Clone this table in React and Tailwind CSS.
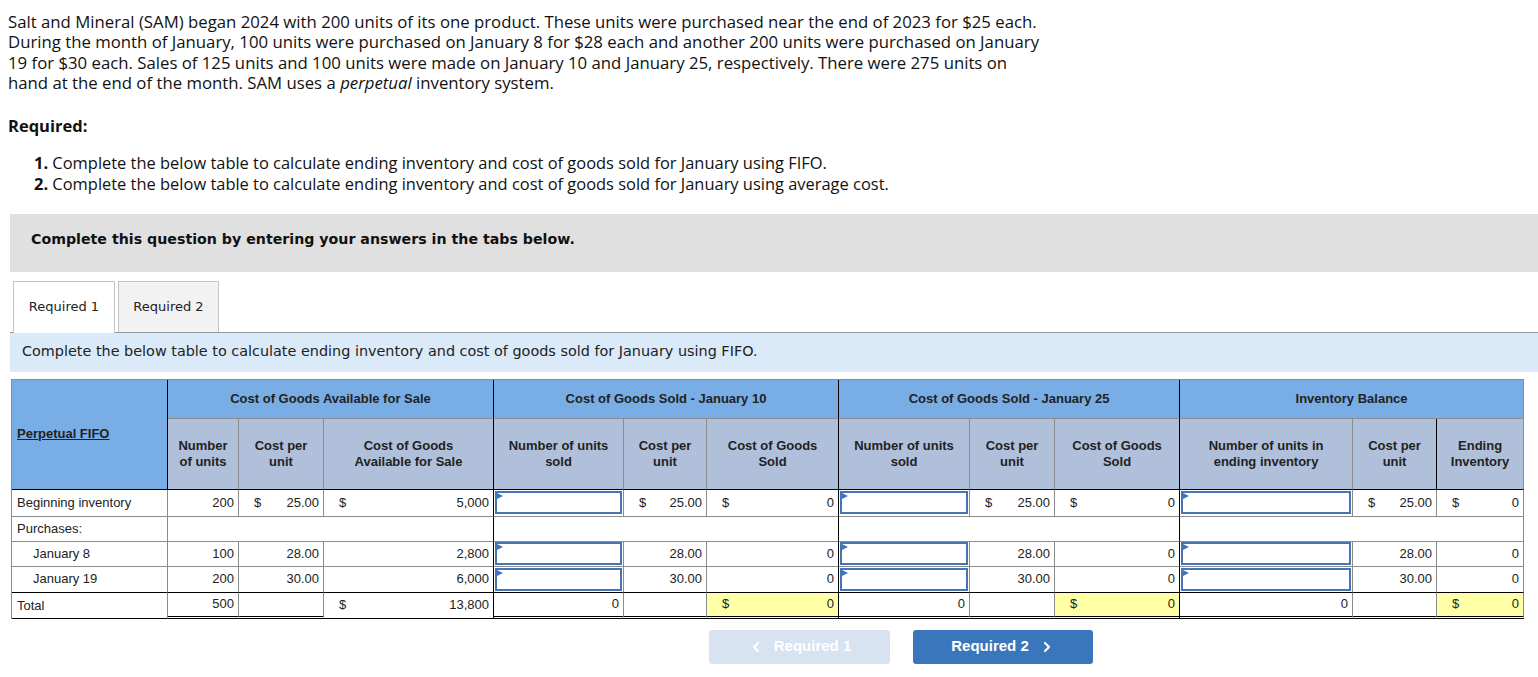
import React from 'react';
import { ChevronLeft, ChevronRight } from 'lucide-react';

const intro = "font-['Open_Sans','Lato',sans-serif] text-[#111]";
const verd = "font-['DejaVu_Sans','Verdana',sans-serif]";
const arial = "font-['Liberation_Sans','Arial',sans-serif]";

const RIGHT = {
  g: 'border-r border-r-[#8c8c8c]',
  k: 'border-r border-r-black',
};
const BOTTOM = {
  g: 'border-b border-b-[#8c8c8c]',
  k: 'border-b border-b-black',
  d: 'border-b-[3px] border-double border-b-black',
};

function Cell({ children, r = 'g', b = 'g', colSpan, className = '' }) {
  return (
    <td colSpan={colSpan} className={`${RIGHT[r]} ${BOTTOM[b]} p-0 align-middle ${className}`}>
      {children}
    </td>
  );
}

const Num = ({ v }) => <div className="text-right pr-[4px]">{v}</div>;

const Money = ({ v }) => (
  <div className="flex justify-between pl-[15px] pr-[4px]">
    <span>$</span>
    <span>{v}</span>
  </div>
);

const InputBox = () => (
  <div className="relative mx-[1px] h-[calc(100%-2px)] min-h-[23px] border-2 border-[#4674b4] bg-white">
    <span className="absolute left-0 top-0 h-0 w-0 border-y-[3px] border-l-[6px] border-y-transparent border-l-[#3d74c4]" />
  </div>
);

const heads = [
  { title: 'Cost of Goods Available for Sale', subs: [['Number', 'of units'], ['Cost per', 'unit'], ['Cost of Goods', 'Available for Sale']] },
  { title: 'Cost of Goods Sold - January 10', subs: [['Number of units', 'sold'], ['Cost per', 'unit'], ['Cost of Goods', 'Sold']] },
  { title: 'Cost of Goods Sold - January 25', subs: [['Number of units', 'sold'], ['Cost per', 'unit'], ['Cost of Goods', 'Sold']] },
  { title: 'Inventory Balance', subs: [['Number of units in', 'ending inventory'], ['Cost per', 'unit'], ['Ending', 'Inventory']] },
];

const widths = [156, 71, 85, 170, 130, 83, 132, 131, 85, 125, 173, 84, 87];

function SoldGroup({ cost, first, last }) {
  return (
    <>
      <Cell><InputBox /></Cell>
      <Cell>{first ? <Money v={cost} /> : <Num v={cost} />}</Cell>
      <Cell r={last ? 'g' : 'k'}>{first ? <Money v="0" /> : <Num v="0" />}</Cell>
    </>
  );
}

function TotalGroup({ last }) {
  return (
    <>
      <Cell b="d"><Num v="0" /></Cell>
      <Cell b="d" />
      <Cell r={last ? 'g' : 'k'} b="d" className="bg-[#ffffa8]"><Money v="0" /></Cell>
    </>
  );
}

function FifoTable() {
  return (
    <table className={`ml-[11px] w-[1513px] table-fixed border-separate border-spacing-0 border-l border-t border-[#8c8c8c] text-[13px] text-[#222] ${arial}`}>
      <colgroup>
        {widths.map((w, i) => (
          <col key={i} style={{ width: w }} />
        ))}
      </colgroup>
      <thead>
        <tr className="h-[39px]">
          <th rowSpan={2} className="border-r border-b border-r-black border-b-black bg-[#79ade5] pl-[5px] text-left align-middle font-bold">
            <span className="underline">Perpetual FIFO</span>
          </th>
          {heads.map((h, i) => (
            <th
              key={h.title}
              colSpan={3}
              className={`border-b border-b-[#8c8c8c] bg-[#79ade5] text-center font-bold ${i === 3 ? 'border-r border-r-[#8c8c8c]' : 'border-r border-r-black'}`}
            >
              {h.title}
            </th>
          ))}
        </tr>
        <tr className="h-[71px]">
          {heads.map((h, gi) =>
            h.subs.map((s, si) => (
              <th
                key={`${gi}-${si}`}
                className={`border-b border-b-black bg-[#b1c0da] text-center font-bold leading-[16px] ${
                  si === 2 && gi !== 3 ? 'border-r border-r-black' : gi === 3 && si === 1 ? 'border-r border-r-black' : 'border-r border-r-[#8c8c8c]'
                }`}
              >
                {s[0]}
                <br />
                {s[1]}
              </th>
            ))
          )}
        </tr>
      </thead>
      <tbody>
        <tr className="h-[27px]">
          <Cell className="pl-[5px]">Beginning inventory</Cell>
          <Cell><Num v="200" /></Cell>
          <Cell><Money v="25.00" /></Cell>
          <Cell r="k"><Money v="5,000" /></Cell>
          <SoldGroup cost="25.00" first />
          <SoldGroup cost="25.00" first />
          <SoldGroup cost="25.00" first last />
        </tr>
        <tr className="h-[25px]">
          <Cell className="pl-[5px]">Purchases:</Cell>
          <Cell colSpan={3} r="k" />
          <Cell colSpan={3} r="k" />
          <Cell colSpan={3} r="k" />
          <Cell colSpan={3} />
        </tr>
        {[
          ['January 8', '100', '28.00', '2,800'],
          ['January 19', '200', '30.00', '6,000'],
        ].map((row, i) => (
          <tr key={row[0]} className={i === 0 ? 'h-[25px]' : 'h-[26px]'}>
            <Cell b={i === 1 ? 'k' : 'g'} className="pl-[21px]">{row[0]}</Cell>
            <Cell b={i === 1 ? 'k' : 'g'}><Num v={row[1]} /></Cell>
            <Cell b={i === 1 ? 'k' : 'g'}><Num v={row[2]} /></Cell>
            <Cell b={i === 1 ? 'k' : 'g'} r="k"><Num v={row[3]} /></Cell>
            {[0, 1, 2].map((g) => (
              <React.Fragment key={g}>
                <Cell b={i === 1 ? 'k' : 'g'}><InputBox /></Cell>
                <Cell b={i === 1 ? 'k' : 'g'}><Num v={row[2]} /></Cell>
                <Cell b={i === 1 ? 'k' : 'g'} r={g === 2 ? 'g' : 'k'}><Num v="0" /></Cell>
              </React.Fragment>
            ))}
          </tr>
        ))}
        <tr className="h-[26px]">
          <Cell b="k" className="pl-[5px] pt-px">Total</Cell>
          <Cell b="d"><Num v="500" /></Cell>
          <Cell b="d" />
          <Cell b="k" r="k"><Money v="13,800" /></Cell>
          <TotalGroup />
          <TotalGroup />
          <TotalGroup last />
        </tr>
      </tbody>
    </table>
  );
}

export default function App() {
  return (
    <div className="min-h-[677px] w-[1538px] overflow-hidden bg-white pt-[12px]">
      <p className={`${intro} pl-[8px] text-[16.75px] leading-[20.4px]`}>
        Salt and Mineral (SAM) began 2024 with 200 units of its one product. These units were purchased near the end of 2023 for $25 each.
        <br />
        During the month of January, 100 units were purchased on January 8 for $28 each and another 200 units were purchased on January
        <br />
        19 for $30 each. Sales of 125 units and 100 units were made on January 10 and January 25, respectively. There were 275 units on
        <br />
        hand at the end of the month. SAM uses a <em>perpetual</em> inventory system.
      </p>

      <p className={`${intro} mt-[22px] pl-[8px] text-[16.5px] font-bold leading-[20px]`}>Required:</p>

      <ol className={`${intro} mt-[16px] pl-[34px] text-[16.45px] leading-[21px]`}>
        <li>
          <b>1.</b> Complete the below table to calculate ending inventory and cost of goods sold for January using FIFO.
        </li>
        <li>
          <b>2.</b> Complete the below table to calculate ending inventory and cost of goods sold for January using average cost.
        </li>
      </ol>

      <div className={`${verd} ml-[10px] mt-[20px] h-[58px] bg-[#e0e0e0] pl-[21px] pt-[16px] text-[14.2px] font-bold leading-[18px] text-[#111]`}>
        Complete this question by entering your answers in the tabs below.
      </div>

      <div className="ml-[10px] mt-[9px] flex items-end border-b border-b-[#9a9a9a]">
        <div className={`${verd} -mb-px ml-[3px] flex h-[52px] w-[102px] items-center justify-center border border-b-0 border-[#c4c4c4] bg-white text-[13px] text-[#222]`}>
          Required 1
        </div>
        <div className={`${verd} ml-[3px] flex h-[51px] w-[101px] items-center justify-center border border-b-0 border-[#c4c4c4] bg-[#f2f2f2] text-[13px] text-[#222]`}>
          Required 2
        </div>
      </div>

      <div className={`${verd} ml-[10px] flex h-[39px] items-center bg-[#dbeaf8] pl-[12px] text-[14.4px] text-[#222]`}>
        Complete the below table to calculate ending inventory and cost of goods sold for January using FIFO.
      </div>

      <div className="mt-[7px]">
        <FifoTable />
      </div>

      <div className={`${arial} ml-[709px] mt-[11px] flex gap-[23px] text-[15px] font-bold text-white`}>
        <div className="flex h-[34px] w-[181px] items-center justify-center gap-[10px] rounded-[3px] bg-[#d7e3f1]">
          <ChevronLeft size={16} strokeWidth={3.2} />
          <span>Required 1</span>
        </div>
        <div className="flex h-[34px] w-[180px] items-center justify-center gap-[10px] rounded-[3px] bg-[#3a76bb]">
          <span>Required 2</span>
          <ChevronRight size={16} strokeWidth={3.2} />
        </div>
      </div>
    </div>
  );
}
